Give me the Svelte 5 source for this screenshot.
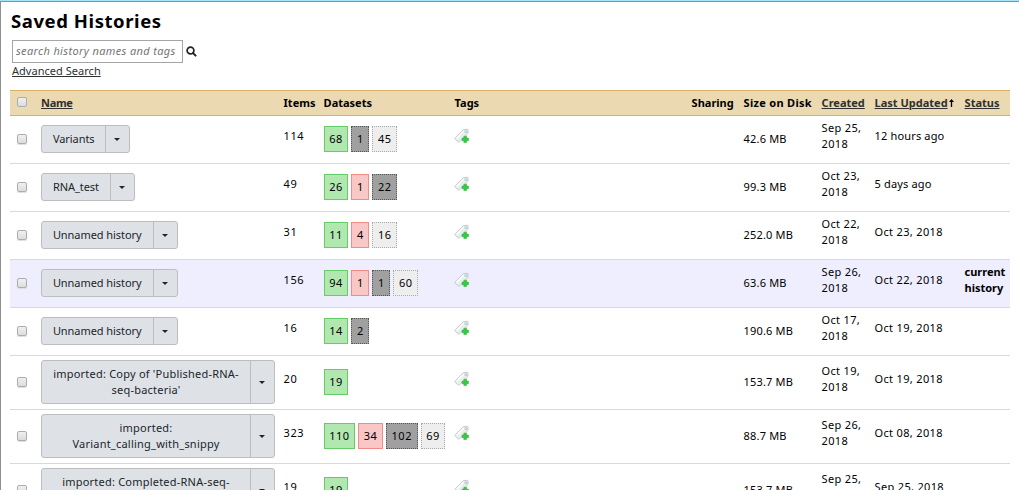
<script>
  const rows = [
    { name: ['Variants'], items: 114, sets: [['ok', 68], ['queued', 1], ['new', 45]], size: '42.6 MB', created: ['Sep 25,', '2018'], updated: '12 hours ago' },
    { name: ['RNA_test'], items: 49, sets: [['ok', 26], ['error', 1], ['queued', 22]], size: '99.3 MB', created: ['Oct 23,', '2018'], updated: '5 days ago' },
    { name: ['Unnamed history'], items: 31, sets: [['ok', 11], ['error', 4], ['new', 16]], size: '252.0 MB', created: ['Oct 22,', '2018'], updated: 'Oct 23, 2018' },
    { name: ['Unnamed history'], items: 156, sets: [['ok', 94], ['error', 1], ['queued', 1], ['new', 60]], size: '63.6 MB', created: ['Sep 26,', '2018'], updated: 'Oct 22, 2018', current: true },
    { name: ['Unnamed history'], items: 16, sets: [['ok', 14], ['queued', 2]], size: '190.6 MB', created: ['Oct 17,', '2018'], updated: 'Oct 19, 2018' },
    { name: ["imported: Copy of 'Published-RNA-", "seq-bacteria'"], items: 20, sets: [['ok', 19]], size: '153.7 MB', created: ['Oct 19,', '2018'], updated: 'Oct 19, 2018' },
    { name: ['imported:', 'Variant_calling_with_snippy'], items: 323, sets: [['ok', 110], ['error', 34], ['queued', 102], ['new', 69]], size: '88.7 MB', created: ['Sep 26,', '2018'], updated: 'Oct 08, 2018' },
    { name: ['imported: Completed-RNA-seq-', 'bacteria'], items: 19, sets: [['ok', 19]], size: '153.7 MB', created: ['Sep 25,', '2018'], updated: 'Sep 25, 2018' }
  ];
</script>

<main>
  <h1>Saved Histories</h1>
  <div class="search">
    <input class="query" type="text" placeholder="search history names and tags" />
    <svg width="11" height="11" viewBox="0 0 11 11"><circle cx="4.5" cy="4.5" r="3.4" fill="none" stroke="#212529" stroke-width="1.7" /><path d="M7 7L9.6 9.6" stroke="#212529" stroke-width="2" stroke-linecap="round" /></svg>
  </div>
  <div class="adv"><a href="#advanced">Advanced Search</a></div>

  <div class="table">
    <div class="row head">
      <span><input class="check" type="checkbox" /></span>
      <span class="name"><a href="#name">Name</a></span>
      <span>Items</span>
      <span>Datasets</span>
      <span>Tags</span>
      <span>Sharing</span>
      <span class="disk">Size on Disk</span>
      <span><a href="#created">Created</a></span>
      <span class="sorted"><a href="#updated">Last Updated</a><svg width="7" height="9" viewBox="0 0 7 9"><path d="M3.5 8V1.5" stroke="#000" stroke-width="1.3" /><path d="M3.5 0L6 3.1H1Z" /></svg></span>
      <span><a href="#status">Status</a></span>
    </div>
    {#each rows as row}
      <div class="row body" class:current={row.current} class:tall={row.name.length > 1}>
        <span><input class="check" type="checkbox" /></span>
        <div class="group">
          <button class="label">{#each row.name as line}<span>{line}</span>{/each}</button>
          <button class="toggle" aria-label="Menu"><i></i></button>
        </div>
        <span class="num lift">{row.items}</span>
        <div class="sets">
          {#each row.sets as [state, count]}<span class="set {state}">{count}</span>{/each}
        </div>
        <span class="lift tag">
          <svg width="16" height="16" viewBox="0 0 16 16">
            <path d="M9.3 1.6L13.2 1.3Q14.2 1.3 14.2 2.3L13.9 5.6L5.9 13.5Q4.8 14.5 3.8 13.6L1.3 11.4Q.5 10.5 1.4 9.6Z" fill="#e9efef" stroke="#b9c4c8" stroke-width=".8" />
            <path d="M9.6 3.2L2.8 10.2" stroke="#fff" stroke-width="1.3" />
            <circle cx="11.9" cy="3.6" r="1" fill="#fff" stroke="#9eabb0" stroke-width=".7" />
            <path d="M9.9 8.2h2.6v1.9h1.9v2.6h-1.9v1.9H9.9v-1.9H8v-2.6h1.9z" fill="#38cb42" stroke="#35b23f" stroke-width=".6" stroke-linejoin="round" />
          </svg>
        </span>
        <span></span>
        <span class="num size">{row.size}</span>
        <span class="date lift">{#each row.created as line}<span>{line}</span>{/each}</span>
        <span class="date lift" class:ago={row.updated.endsWith('ago')}>{row.updated}</span>
        <span class="status">{#if row.current}<span>current</span><span>history</span>{/if}</span>
      </div>
    {/each}
  </div>
</main>

<style>
  :global(body) { overflow: hidden; }
  main {
    box-sizing: border-box;
    height: 489px;
    overflow: hidden;
    border-left: 1px solid #8f8f8f;
    border-top: 1px solid #8f8f8f;
    box-shadow: 0 -1px #a5e3fa;
    margin-top: 1px;
    padding: 7px 9px 0;
    background: #fff;
    color: #000;
    font: 11px/16px 'Noto Sans', 'Open Sans', sans-serif;
    letter-spacing: .33px;
  }
  h1 { margin: 0 0 0 1px; font-size: 18.5px; line-height: 24px; height: 30px; letter-spacing: .57px; font-weight: 700; }
  a { color: #303030; text-decoration: underline; text-underline-offset: 1px; }
  .search { display: flex; align-items: center; height: 24px; margin-left: 2px; }
  .query {
    box-sizing: border-box; width: 171px; height: 23px; padding: 0 3px 1px; margin-right: 3px;
    border: 1px solid #a5a5a5; font: italic 11px 'Noto Sans', sans-serif; letter-spacing: .36px; outline: 0;
  }
  .query::placeholder { color: #757575; opacity: 1; }
  .adv { margin-left: 2px; height: 27px; }
  .adv a { letter-spacing: .03px; }
  .row {
    display: grid;
    grid-template-columns: 24px 242.6px 40px 131px 237px 52px 78px 53px 90px 45px;
    align-items: center;
    box-sizing: border-box;
    width: 1000px;
    padding-left: 7px;
    border-bottom: 1px solid #d9d9d9;
    white-space: nowrap;
  }
  .head {
    height: 26px;
    background: #ebd9b2;
    border-top: 1px solid #d8b365;
    border-bottom-color: #d8b365;
    font-weight: 700;
    letter-spacing: 0;
  }
  .head .check { position: relative; top: -1px; }
  .name { letter-spacing: -.3px; }
  .disk { letter-spacing: .3px; }
  .sorted svg { position: relative; top: 1px; }
  .body { height: 48px; padding-bottom: 1px; }
  .tall { height: 54px; }
  .current { background: #eeeeff; }
  .check {
    appearance: none; display: block; box-sizing: border-box; width: 10px; height: 10px; margin: 0;
    border: 1px solid #adadad; border-radius: 2px; background: linear-gradient(#f0f0f0, #dcdcdc);
    box-shadow: 0 1px 1px #ddd;
  }
  .group { display: flex; }
  button {
    box-sizing: border-box; margin: 0; border: 1px solid #bdbdbd; background: #dee2e6;
    color: #212529; font: inherit; letter-spacing: -.06px; min-height: 28px;
  }
  .label { padding: 0 10.9px; border-radius: 3px 0 0 3px; }
  .label span { display: block; }
  .tall .label { width: 210px; height: 44px; padding: 0; letter-spacing: .22px; }
  .toggle { width: 25px; margin-left: -1px; padding: 0 1px 0 0; border-radius: 0 3px 3px 0; display: grid; place-items: center; }
  .toggle i { border: 3.5px solid transparent; border-top-color: #212529; border-bottom: 0; }
  .lift { padding-bottom: 6px; }
  .num { letter-spacing: .5px; }
  .size { letter-spacing: .17px; }
  .ago { letter-spacing: .15px; }
  .tag svg { display: block; margin-left: -.6px; }
  .sets { display: flex; gap: 3px; }
  .set { box-sizing: border-box; height: 26px; padding: 4px 4.6px; border: 1px solid; letter-spacing: .5px; }
  .ok { background: #b0e8b0; border-color: #66cc66; }
  .error { background: #f9c7c5; border-color: #f48b89; }
  .queued { background: #a0a0a0; border: 1px dotted #555; }
  .new { background: #eee; border: 1px dotted #aaa; }
  .date span, .status span { display: block; }
  .status { font-weight: 700; letter-spacing: -.03px; padding-bottom: 6px; }
</style>
